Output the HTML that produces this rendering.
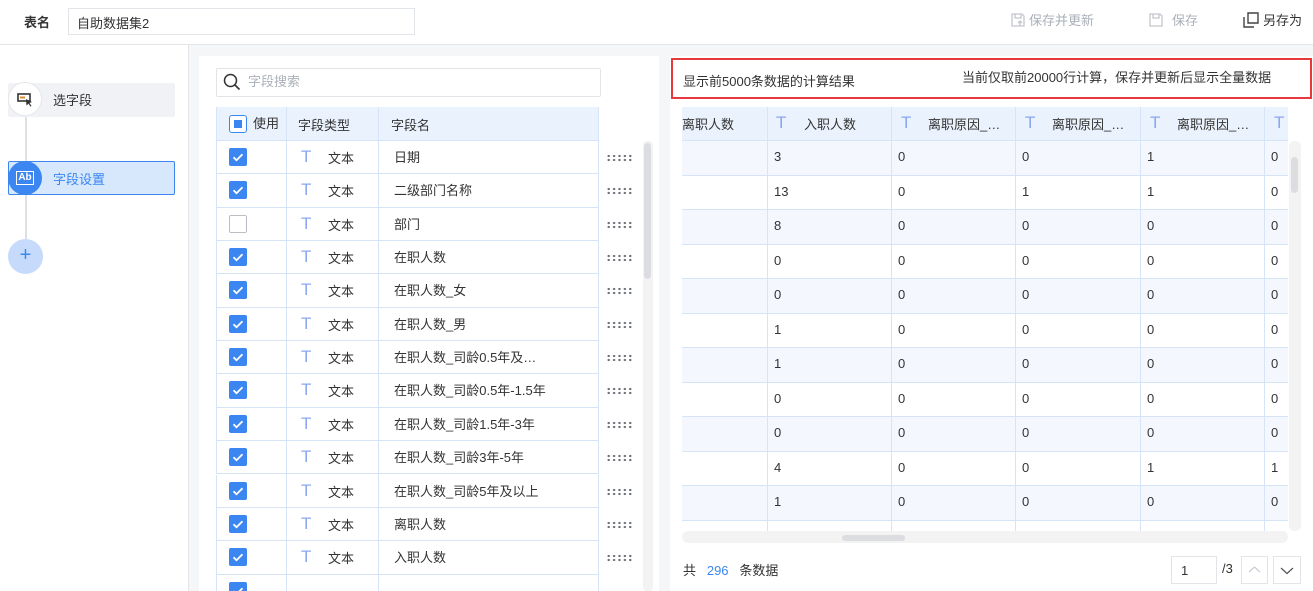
<!DOCTYPE html>
<html><head><meta charset="utf-8">
<style>
*{box-sizing:border-box;margin:0;padding:0}
html,body{width:1313px;height:591px;overflow:hidden}
body{background:#f5f6f8;font-family:"Liberation Sans","Noto Sans CJK SC",sans-serif;font-size:13px;color:#333;position:relative}
.a{position:absolute}
.hdr{left:0;top:0;width:1313px;height:45px;background:#fff;border-bottom:1px solid #e3e5e8}
.side{left:0;top:45px;width:189px;height:546px;background:#fff;border-right:1px solid #e3e5e8}
.cb{width:18px;height:18px;border-radius:2px;background:#3b86f0}
.cb svg{display:block}
.cbo{width:18px;height:18px;border-radius:2px;border:1px solid #b9bec6;background:#fff}
.T{color:#8aa7f0;font-size:17px;font-weight:300}
.dots{width:27px;height:8px;background-image:radial-gradient(circle,#6b7079 1.1px,transparent 1.3px);background-size:5.4px 4px}
.row{position:absolute;height:34px;border-bottom:1px solid #d6e4f8;width:383px;left:0;border-left:1px solid #d6e4f8;border-right:1px solid #d6e4f8;background:#fff}
.row span{position:absolute;top:7px}
.rr{position:absolute;left:0;width:606px;height:35px;border-bottom:1px solid #d6e4f8}
.rr span{position:absolute;top:8px}
.vl{position:absolute;top:0;width:1px;background:#d6e4f8}
</style></head><body>
<div class="a hdr"></div>
<div class="a" style="left:24px;top:12px;font-weight:bold;font-size:13px">表名</div>
<div class="a" style="left:68px;top:8px;width:347px;height:27px;border:1px solid #e1e4e8;padding:4px 8px;font-size:13px">自助数据集2</div>
<div class="a" style="left:1010px;top:10px;color:#aab0b8"><svg width="16" height="16" viewBox="0 0 16 16" style="vertical-align:-3px;margin-right:3px"><path d="M2 2h10l2 2v10H2z" fill="none" stroke="#c3c7cd" stroke-width="1.3"/><path d="M5 2v4h6V2M10 14v-5M8 11l2-2 2 2" fill="none" stroke="#c3c7cd" stroke-width="1.3"/></svg>保存并更新</div>
<div class="a" style="left:1148px;top:10px;color:#aab0b8"><svg width="16" height="16" viewBox="0 0 16 16" style="vertical-align:-3px;margin-right:8px"><path d="M2 2h10l2 2v10H2z" fill="none" stroke="#c3c7cd" stroke-width="1.3"/><path d="M5 2v4h6V2" fill="none" stroke="#c3c7cd" stroke-width="1.3"/></svg>保存</div>
<div class="a" style="left:1243px;top:10px;color:#333"><svg width="16" height="16" viewBox="0 0 16 16" style="vertical-align:-3px;margin-right:4px"><path d="M5 1h10v10H5z M1 5v10h10" fill="none" stroke="#444" stroke-width="1.4"/></svg>另存为</div>

<div class="a side"></div>
<div class="a" style="left:25px;top:116px;width:2px;height:130px;background:#dde0e4"></div>
<div class="a" style="left:8px;top:83px;width:167px;height:34px;background:#f1f2f6;border-radius:2px"></div>
<div class="a" style="left:8px;top:82px;width:34px;height:34px;border-radius:50%;background:#fff;border:1px solid #e5e7ea"></div>
<svg class="a" style="left:17px;top:92px" width="18" height="16" viewBox="0 0 18 16"><rect x="1" y="2" width="12" height="7" fill="none" stroke="#333" stroke-width="1.6"/><rect x="3" y="4.5" width="5" height="2" fill="#e08a2e"/><path d="M9 7l6 3-2.5 1 2 3-1 .6-2-3-2 2z" fill="#333"/></svg>
<div class="a" style="left:53px;top:90px">选字段</div>
<div class="a" style="left:8px;top:161px;width:167px;height:34px;background:#d7e7fc;border:1px solid #3b86f0;border-radius:2px"></div>
<div class="a" style="left:8px;top:161px;width:34px;height:34px;border-radius:50%;background:#3b86f0"></div>
<div class="a" style="left:16px;top:171px;width:18px;height:14px;border:1.5px solid #fff;color:#fff;font-size:10px;font-weight:bold;line-height:11px;text-align:center">Ab</div>
<div class="a" style="left:53px;top:169px;color:#3b86f0">字段设置</div>
<div class="a" style="left:8px;top:239px;width:35px;height:35px;border-radius:50%;background:#c6dbfb;color:#3b86f0;font-size:20px;line-height:33px;text-align:center;font-weight:300">+</div>

<div class="a" style="left:199px;top:56px;width:460px;height:535px;background:#fff"></div>
<div class="a" style="left:216px;top:68px;width:385px;height:29px;border:1px solid #e1e4e8;border-radius:2px"></div>
<svg class="a" style="left:223px;top:73px" width="18" height="18" viewBox="0 0 18 18"><circle cx="7.5" cy="7.5" r="6" fill="none" stroke="#333" stroke-width="1.5"/><path d="M12 12l4.5 4.5" stroke="#333" stroke-width="1.6"/></svg>
<div class="a" style="left:248px;top:71px;color:#aab0b8">字段搜索</div>
<div class="a" style="left:216px;top:107px;width:430px;height:484px;overflow:hidden">
<div class="row" style="top:0;background:#eaf2fd;height:34px"><div class="a" style="left:12px;top:8px;width:18px;height:18px;border:1.5px solid #3b86f0;border-radius:3px;background:#fff"><div style="margin:3.5px;width:8px;height:8px;background:#3b86f0"></div></div><span style="left:36px;top:6px">使用</span><span style="left:81px;top:8px">字段类型</span><span style="left:174px;top:8px">字段名</span></div>
<div id="lrows"></div>
<div class="a" style="left:70px;top:0;width:1px;height:484px;background:#d6e4f8"></div>
<div class="a" style="left:162px;top:0;width:1px;height:484px;background:#d6e4f8"></div>
</div>
<div class="a" style="left:643px;top:141px;width:10px;height:450px;background:#f3f3f4;border-radius:4px"></div>
<div class="a" style="left:644px;top:143px;width:7px;height:136px;background:#dcdde0;border-radius:4px"></div>

<div class="a" style="left:670px;top:56px;width:643px;height:535px;background:#fff"></div>
<div class="a" style="left:671px;top:58px;width:641px;height:41px;border:2px solid #e8383d"></div>
<div class="a" style="left:683px;top:71px">显示前5000条数据的计算结果</div>
<div class="a" style="left:962px;top:67px">当前仅取前20000行计算，保存并更新后显示全量数据</div>
<div class="a" style="left:682px;top:107px;width:606px;height:424px;overflow:hidden" id="rrows"></div>
<div class="a" style="left:1289px;top:141px;width:12px;height:390px;background:#f3f3f4;border-radius:5px"></div>
<div class="a" style="left:1291px;top:157px;width:7px;height:36px;background:#dcdde0;border-radius:4px"></div>
<div class="a" style="left:682px;top:531px;width:606px;height:12px;background:#f3f3f4;border-radius:6px"></div>
<div class="a" style="left:842px;top:535px;width:63px;height:6px;background:#dcdde0;border-radius:3px"></div>
<div class="a" style="left:683px;top:560px">共 &nbsp; <span style="color:#3b86f0">296</span> &nbsp; 条数据</div>
<div class="a" style="left:1171px;top:556px;width:46px;height:28px;border:1px solid #e1e4e8;padding:6px 9px">1</div>
<div class="a" style="left:1222px;top:561px">/3</div>
<div class="a" style="left:1241px;top:556px;width:27px;height:28px;border:1px solid #e1e4e8"><svg width="25" height="26" viewBox="0 0 25 26"><path d="M7 15l5.5-5 5.5 5" fill="none" stroke="#c8ccd2" stroke-width="1.2"/></svg></div>
<div class="a" style="left:1273px;top:556px;width:28px;height:28px;border:1px solid #e1e4e8"><svg width="26" height="26" viewBox="0 0 26 26"><path d="M7 11l6 5.5 6-5.5" fill="none" stroke="#555" stroke-width="1.2"/></svg></div>

<script>
var names=["日期","二级部门名称","部门","在职人数","在职人数_女","在职人数_男","在职人数_司龄0.5年及…","在职人数_司龄0.5年-1.5年","在职人数_司龄1.5年-3年","在职人数_司龄3年-5年","在职人数_司龄5年及以上","离职人数","入职人数",""];
var chk='<div class="a cb" style="left:12px;top:7px"><svg width="18" height="18" viewBox="0 0 18 18"><path d="M4.5 9.2l3 3 6-6" fill="none" stroke="#fff" stroke-width="1.8"/></svg></div>';
var h='';
for(var i=0;i<names.length;i++){
 var t=34+i*33.35;
 h+='<div class="row" style="top:'+t+'px;height:33.35px">'+(i==2?'<div class="a cbo" style="left:12px;top:7px"></div>':chk)+(names[i]?'<span class="T" style="left:84px;top:6px">T</span><span style="left:111px;top:7px">文本</span><span style="left:177px;top:6px">'+names[i]+'</span>':'')+'</div>';
 if(names[i])h+='<div class="a dots" style="left:390px;top:'+(t+13)+'px"></div>';
}
document.getElementById('lrows').innerHTML=h;
var data=[["3","0","0","1","0"],["13","0","1","1","0"],["8","0","0","0","0"],["0","0","0","0","0"],["0","0","0","0","0"],["1","0","0","0","0"],["1","0","0","0","0"],["0","0","0","0","0"],["0","0","0","0","0"],["4","0","0","1","1"],["1","0","0","0","0"],["","","","",""]];
var xs=[86,210,334,459,583];
var r='<div class="rr" style="top:0;height:34px;background:#eaf2fd"><span style="left:0;top:7px">离职人数</span><span class="T" style="left:94px;top:6px">T</span><span style="left:122px;top:7px">入职人数</span>';
var hn=["离职原因_…","离职原因_…","离职原因_…"];
for(var k=0;k<3;k++){r+='<span class="T" style="left:'+(xs[k+1]+9)+'px;top:6px">T</span><span style="left:'+(xs[k+1]+36)+'px;top:7px">'+hn[k]+'</span>';}
r+='<span class="T" style="left:592px;top:6px">T</span></div>';
for(var i=0;i<data.length;i++){
 r+='<div class="rr" style="top:'+(34+i*34.5)+'px;height:34.5px;background:'+(i%2==0?'#f4f8fe':'#fff')+'">';
 for(var k=0;k<5;k++)r+='<span style="left:'+(xs[k]+6)+'px">'+data[i][k]+'</span>';
 r+='</div>';
}
for(var k=0;k<5;k++)r+='<div class="vl" style="left:'+(xs[k]-1)+'px;height:460px"></div>';
document.getElementById('rrows').innerHTML=r;
</script>
</body></html>
